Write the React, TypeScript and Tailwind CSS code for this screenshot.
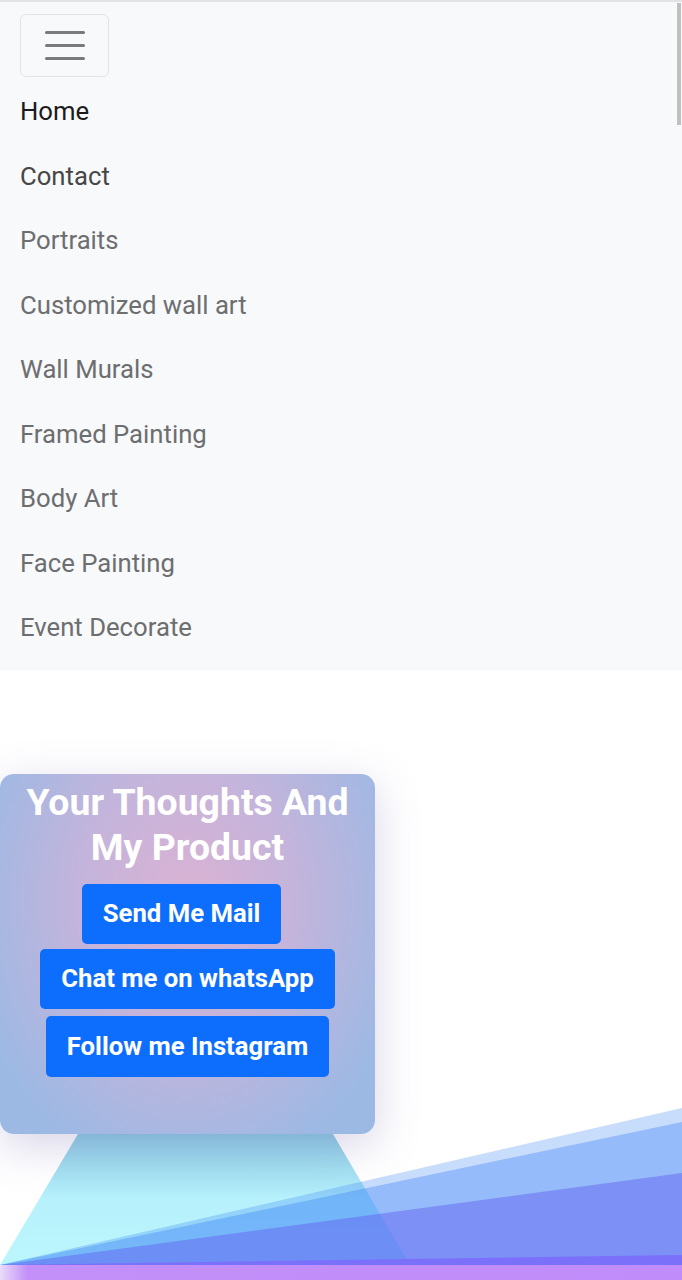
import { useState } from 'react';

const links = [
  'Home',
  'Contact',
  'Portraits',
  'Customized wall art',
  'Wall Murals',
  'Framed Painting',
  'Body Art',
  'Face Painting',
  'Event Decorate',
];

function linkColor(i: number) {
  if (i === 0) return 'text-[#1c1c1c]';
  if (i === 1) return 'text-[#474747]';
  return 'text-[#6d6e70]';
}

function Navbar() {
  const [open, setOpen] = useState(true);
  return (
    <nav className="bg-[#f8f9fa] border-t-2 border-[#e2e3e5] px-5 pt-3 pb-[10px]">
      <button
        onClick={() => setOpen(!open)}
        className="w-[89px] h-[63px] border border-[#e3e4e6] rounded-md flex flex-col items-center justify-center gap-[10px]"
      >
        <span className="block w-10 h-[3px] bg-[#7a7a7a] rounded-full" />
        <span className="block w-10 h-[3px] bg-[#7a7a7a] rounded-full" />
        <span className="block w-10 h-[3px] bg-[#7a7a7a] rounded-full" />
      </button>
      {open && (
        <ul className="mt-[2px] flex flex-col">
          {links.map((l, i) => (
            <li key={l} className={`leading-[64.5px] text-[25.7px] ${linkColor(i)}`}>
              <a href="#">{l}</a>
            </li>
          ))}
        </ul>
      )}
    </nav>
  );
}

function Beams() {
  return (
    <svg
      className="absolute left-0 bottom-0 w-[682px] h-[180px]"
      viewBox="0 0 682 180"
      preserveAspectRatio="none"
    >
      <defs>
        <linearGradient id="beam" x1="0" y1="0" x2="0" y2="1">
          <stop offset="0" stopColor="#8ccbe3" />
          <stop offset="0.5" stopColor="#b6f1fc" />
          <stop offset="1" stopColor="#bcf6fd" />
        </linearGradient>
        <linearGradient id="floor" x1="0" y1="0" x2="1" y2="0">
          <stop offset="0" stopColor="#eadcf9" />
          <stop offset="0.04" stopColor="#c390f9" />
          <stop offset="1" stopColor="#bf8cf9" />
        </linearGradient>
      </defs>
      <polygon points="78,34 333,34 410,165 0,165" fill="url(#beam)" />
      <polygon points="0,165 682,8 682,165" fill="#3b82f6" opacity="0.28" />
      <polygon points="0,165 682,22 682,165" fill="#3b82f6" opacity="0.36" />
      <polygon points="0,165 682,73 682,165" fill="#6366f1" opacity="0.5" />
      <polygon points="0,165 682,155 682,165" fill="#7b70fa" />
      <rect x="0" y="165" width="682" height="15" fill="url(#floor)" />
    </svg>
  );
}

function ContactCard() {
  return (
    <div className="relative z-10 w-[375px] rounded-[14px] pt-[6px] pb-[57px] flex flex-col items-center bg-[radial-gradient(ellipse_at_50%_35%,#dab2d3_0%,#c4b4db_40%,#9cb9e4_85%)] shadow-[0_12px_45px_rgba(110,100,170,0.28)]">
      <h2 className="text-white font-bold text-[37.4px] leading-[45px] text-center">
        Your Thoughts And
        <br />
        My Product
      </h2>
      <div className="mt-[14px] flex flex-col items-center">
        <a href="#" className="mr-[12px] h-[60px] px-[21px] flex items-center bg-[#0d6efd] text-white font-bold text-[25.7px] rounded-[5px]">
          Send Me Mail
        </a>
        <a href="#" className="mt-[5px] h-[60px] px-[21px] flex items-center bg-[#0d6efd] text-white font-bold text-[25.7px] rounded-[5px]">
          Chat me on whatsApp
        </a>
        <a href="#" className="mt-[7px] h-[61px] px-[21px] flex items-center bg-[#0d6efd] text-white font-bold text-[25.7px] rounded-[5px]">
          Follow me Instagram
        </a>
      </div>
    </div>
  );
}

export default function App() {
  return (
    <div className="relative w-[682px] h-[1280px] overflow-hidden bg-white font-['Roboto',sans-serif]">
      <Navbar />
      <section className="relative h-[610px] pt-[104px]">
        <Beams />
        <ContactCard />
      </section>
      <div className="absolute right-[1px] top-[3px] w-[4px] h-[122px] bg-[#c0c0c0]" />
    </div>
  );
}
